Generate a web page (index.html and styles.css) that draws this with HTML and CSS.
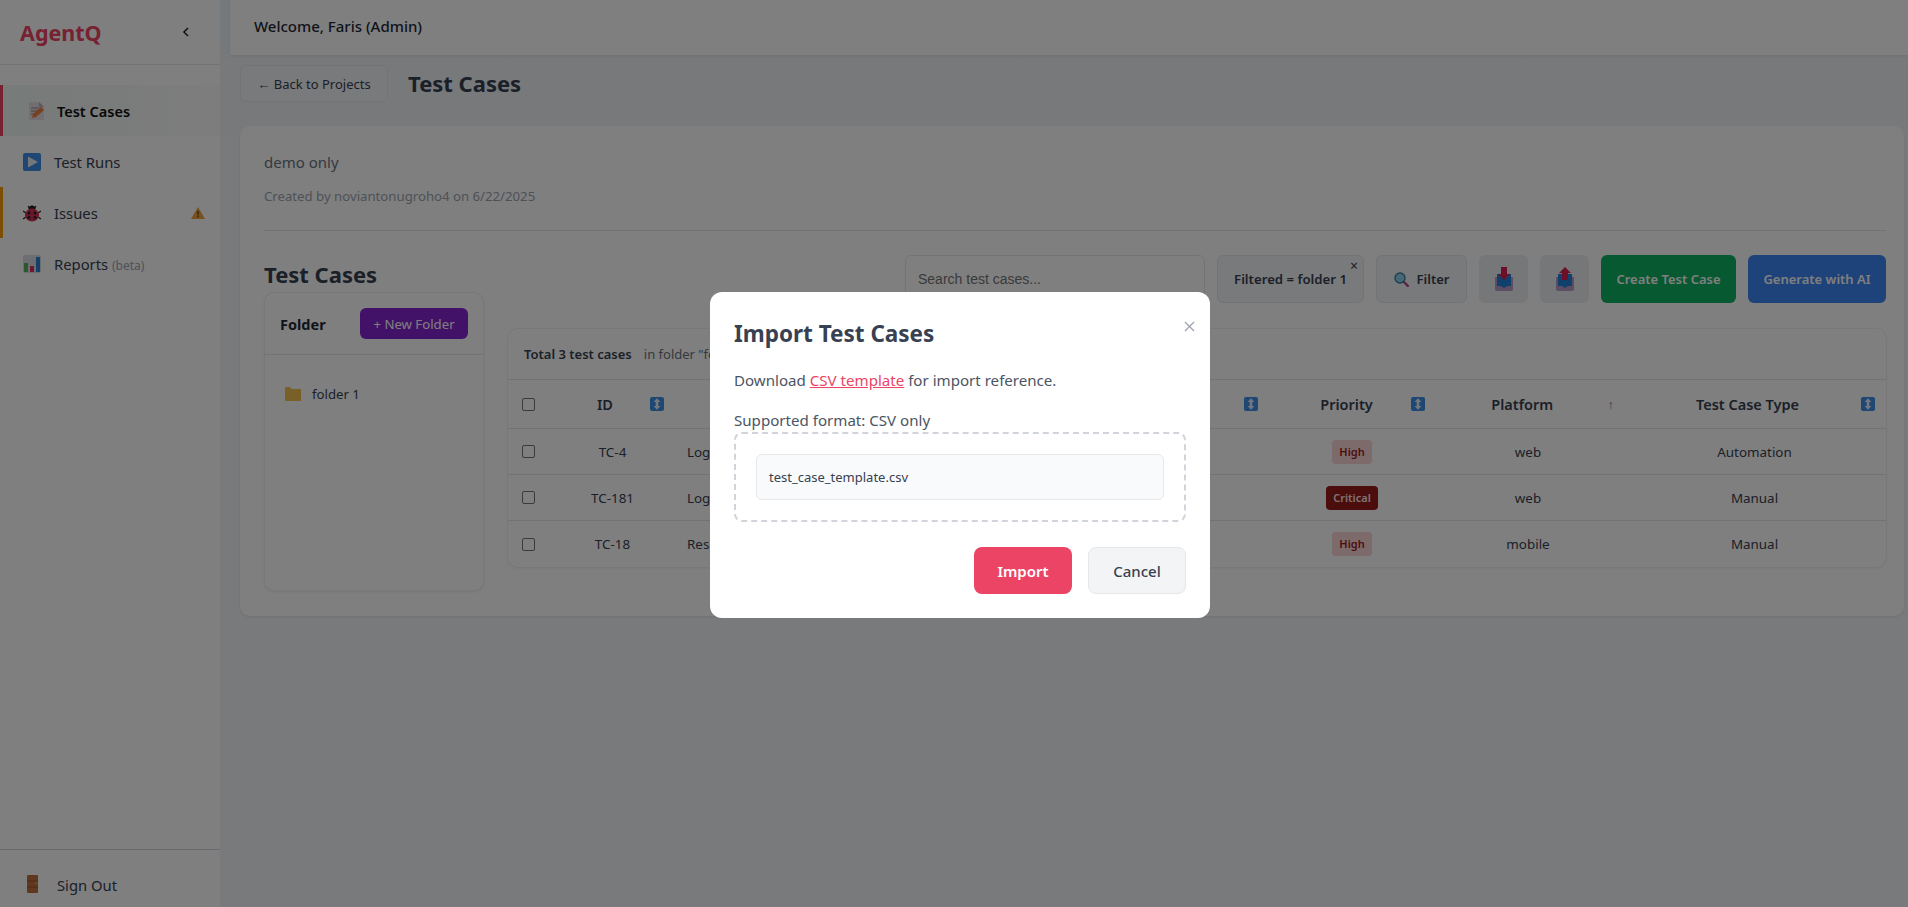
FILE: index.html
```html
<!DOCTYPE html>
<html>

<head>
    <meta content="width=device-width, initial-scale=1" name="viewport" />
    <title>AgentQ - Test Cases</title>
    <link rel="stylesheet" href="styles.css">
</head>

<body>
    <!-- icons used more than once -->
    <svg class="defs" width="0" height="0">
        <symbol id="sort" viewBox="0 0 14 14">
            <rect width="14" height="14" rx="2" fill="#3f8fe8" />
            <path d="M7 1.2 10.4 5H8.3v4h2.1L7 12.8 3.6 9h2.1V5H3.6z" fill="#e8eef6" />
        </symbol>
        <symbol id="tray" viewBox="0 0 20 24">
            <path d="M1 10h18v12a2 2 0 0 1-2 2H3a2 2 0 0 1-2-2z" fill="#b99ac9" />
            <path d="M3 7h14v12h-4l-3 2-3-2H3z" fill="#1f83d8" />
        </symbol>
    </svg>

    <div class="app">
        <aside class="sidebar">
            <div class="brand">
                <span class="logo">AgentQ</span>
                <span class="collapse">
                    <svg width="8" height="10" viewBox="0 0 8 10"><path d="M6 1 2 5l4 4" fill="none" stroke="#1f2937" stroke-width="1.6" /></svg>
                </span>
            </div>
            <nav class="nav">
                <a class="nav-item active">
                    <svg class="nav-icon" width="18" height="18" viewBox="0 0 18 18">
                        <path d="M1 0h10l5 5v13H1z" fill="#e4dce4" />
                        <path d="M11 0l5 5h-5z" fill="#b9adb9" />
                        <path d="M3 6h8M3 9h8M3 12h5" stroke="#94848f" stroke-width="1.2" />
                        <path d="M4 16l1-4 8-7 3 3-8 7z" fill="#f0803c" />
                    </svg>
                    <span>Test Cases</span>
                </a>
                <a class="nav-item">
                    <svg class="nav-icon" width="18" height="18" viewBox="0 0 18 18">
                        <rect width="18" height="18" rx="2" fill="#3f8fe8" />
                        <path d="M5 3.5 15 9 5 14.5z" fill="#e8eef6" />
                    </svg>
                    <span>Test Runs</span>
                </a>
                <a class="nav-item warn">
                    <svg class="nav-icon" width="18" height="18" viewBox="0 0 18 18">
                        <path d="M5 2 7 5M13 2l-2 3M0 7l3 2M18 7l-3 2M0 15l3-2M18 15l-3-2" stroke="#222" stroke-width="1.2" />
                        <circle cx="9" cy="5" r="3.5" fill="#222" />
                        <ellipse cx="9" cy="11" rx="7" ry="6.5" fill="#d22f52" />
                        <circle cx="6" cy="9" r="1.5" fill="#222" />
                        <circle cx="12" cy="9" r="1.5" fill="#222" />
                        <circle cx="6" cy="13.5" r="1.5" fill="#222" />
                        <circle cx="12" cy="13.5" r="1.5" fill="#222" />
                    </svg>
                    <span>Issues</span>
                    <svg class="alert" width="14" height="12" viewBox="0 0 14 12">
                        <path d="M7 0 14 12H0z" fill="#f2a33a" />
                        <path d="M6.4 4h1.2l-.2 4.4h-.8zM6.4 9.2h1.2v1.2H6.4z" fill="#222" />
                    </svg>
                </a>
                <a class="nav-item">
                    <svg class="nav-icon" width="18" height="18" viewBox="0 0 18 18">
                        <rect width="18" height="18" rx="2" fill="#d8dde2" />
                        <rect x="1" y="8" width="4" height="9" fill="#57b05c" />
                        <rect x="7" y="11" width="4" height="6" fill="#d63060" />
                        <rect x="13" y="2" width="4" height="15" fill="#2b80d0" />
                    </svg>
                    <span>Reports <small class="beta">(beta)</small></span>
                </a>
            </nav>
            <a class="sign-out">
                <svg width="11" height="18" viewBox="0 0 11 18">
                    <rect width="11" height="18" rx="1" fill="#c0703c" />
                    <path d="M0 6h11M0 12h11" stroke="#9c5528" />
                    <rect x="8.5" y="7.5" width="1.5" height="1.5" fill="#f0b050" />
                </svg>
                <span>Sign Out</span>
            </a>
        </aside>

        <div class="main">
            <header class="topbar">Welcome, Faris (Admin)</header>

            <div class="page-head">
                <button class="back">← Back to Projects</button>
                <h1>Test Cases</h1>
            </div>

            <section class="card">
                <p class="desc">demo only</p>
                <p class="meta">Created by noviantonugroho4 on 6/22/2025</p>
                <hr class="rule">

                <div class="toolbar">
                    <h2>Test Cases</h2>
                    <div class="tools">
                        <input class="search" placeholder="Search test cases...">
                        <div class="chip">Filtered = folder 1<span class="chip-x">×</span></div>
                        <button class="tool">
                            <svg width="15" height="15" viewBox="0 0 15 15">
                                <path d="m9.5 9.5 4.3 4.3" stroke="#b0488c" stroke-width="2.4" stroke-linecap="round" />
                                <circle cx="6" cy="6" r="5" fill="#8fd0ec" stroke="#3d7fa0" stroke-width="1.4" />
                            </svg>
                            Filter
                        </button>
                        <button class="tool square">
                            <svg width="20" height="24" viewBox="0 0 20 24">
                                <use href="#tray" />
                                <path d="M7 0h6v7h3l-6 6-6-6h3z" fill="#d81e50" />
                            </svg>
                        </button>
                        <button class="tool square">
                            <svg width="20" height="24" viewBox="0 0 20 24">
                                <use href="#tray" />
                                <path d="M7 13V6H4l6-6 6 6h-3v7z" fill="#d81e50" />
                            </svg>
                        </button>
                        <button class="tool create">Create Test Case</button>
                        <button class="tool generate">Generate with AI</button>
                    </div>
                </div>

                <div class="columns">
                    <div class="folders">
                        <div class="folders-head">
                            <span>Folder</span>
                            <button class="new-folder">+ New Folder</button>
                        </div>
                        <div class="folder-list">
                            <div class="folder">
                                <svg width="16" height="14" viewBox="0 0 16 14">
                                    <path d="M0 1a1 1 0 0 1 1-1h4l2 2h9v12H0z" fill="#f0c050" />
                                </svg>
                                folder 1
                            </div>
                        </div>
                    </div>

                    <div class="table-box">
                        <div class="total"><b>Total 3 test cases</b><span>in folder "folder 1"</span></div>
                        <div class="row head">
                            <div class="c-check"><span class="box"></span></div>
                            <div class="c-id"><span class="label">ID</span><svg class="s" width="14" height="14"><use href="#sort" /></svg></div>
                            <div class="c-title"><span class="label">Title</span><svg class="s" width="14" height="14"><use href="#sort" /></svg></div>
                            <div class="c-prio"><span class="label">Priority</span><svg class="s" width="14" height="14"><use href="#sort" /></svg></div>
                            <div class="c-plat"><span class="label">Platform</span><span class="up">↑</span></div>
                            <div class="c-type"><span class="label">Test Case Type</span><svg class="s" width="14" height="14"><use href="#sort" /></svg></div>
                        </div>
                        <div class="row">
                            <div class="c-check"><span class="box"></span></div>
                            <div class="c-id">TC-4</div>
                            <div class="c-title">Login with valid credentials</div>
                            <div class="c-prio"><span class="badge high">High</span></div>
                            <div class="c-plat">web</div>
                            <div class="c-type">Automation</div>
                        </div>
                        <div class="row">
                            <div class="c-check"><span class="box"></span></div>
                            <div class="c-id">TC-181</div>
                            <div class="c-title">Login with invalid password</div>
                            <div class="c-prio"><span class="badge critical">Critical</span></div>
                            <div class="c-plat">web</div>
                            <div class="c-type">Manual</div>
                        </div>
                        <div class="row last">
                            <div class="c-check"><span class="box"></span></div>
                            <div class="c-id">TC-18</div>
                            <div class="c-title">Responsive layout on mobile</div>
                            <div class="c-prio"><span class="badge high">High</span></div>
                            <div class="c-plat">mobile</div>
                            <div class="c-type">Manual</div>
                        </div>
                    </div>
                </div>
            </section>
        </div>
    </div>

    <div class="overlay">
        <div class="modal">
            <span class="modal-x">
                <svg width="11" height="11" viewBox="0 0 11 11"><path d="M1 1l9 9M10 1l-9 9" stroke="#9ca3af" stroke-width="1.3" /></svg>
            </span>
            <h3>Import Test Cases</h3>
            <p class="dl">Download <a class="csv">CSV template</a> for import reference.</p>
            <p class="fmt">Supported format: CSV only</p>
            <div class="drop">
                <div class="file">test_case_template.csv</div>
            </div>
            <div class="actions">
                <button class="btn-import">Import</button>
                <button class="btn-cancel">Cancel</button>
            </div>
        </div>
    </div>
</body>

</html>
```

FILE: styles.css
```css
html,
body {
    height: 100%;
    margin: 0;
}

body {
    font-family: "Noto Sans", sans-serif;
    color: #374151;
    overflow: hidden;
}

.defs {
    display: block;
}

button {
    font-family: inherit;
}

.app {
    display: flex;
    height: 907px;
    background: #f3f4f6;
}

/* sidebar */
.sidebar {
    width: 220px;
    flex-shrink: 0;
    display: flex;
    flex-direction: column;
    background: #fff;
}

.brand {
    height: 64px;
    display: flex;
    align-items: center;
    justify-content: space-between;
    padding: 0 30px 0 20px;
    border-bottom: 1px solid #e5e7eb;
    box-sizing: content-box;
}

.logo {
    color: #ec4465;
    font-size: 21.5px;
    font-weight: 700;
}

.collapse {
    display: flex;
}

.nav {
    flex: 1;
    padding-top: 20px;
}

.nav-item {
    height: 51px;
    display: flex;
    align-items: center;
    gap: 13px;
    padding-left: 23px;
    font-size: 14.8px;
    position: relative;
}

.nav-item.active {
    background: linear-gradient(90deg, #eef6f2, #fafafa);
    color: #111;
    font-weight: 600;
    font-size: 14.5px;
    padding-left: 28px;
    gap: 11px;
    box-shadow: inset 3px 0 0 #ec4465;
}

.nav-item.warn {
    box-shadow: inset 3px 0 0 #f59e0b;
}

.alert {
    position: absolute;
    right: 15px;
}

.beta {
    color: #9ca3af;
    font-size: 12px;
}

.sign-out {
    height: 58px;
    box-sizing: border-box;
    display: flex;
    align-items: flex-start;
    gap: 19px;
    padding: 25px 0 0 27px;
    font-size: 14.8px;
    line-height: 20px;
    border-top: 1px solid #d1d5db;
    margin-top: auto;
}

/* main column */
.main {
    flex: 1;
    min-width: 0;
    padding-left: 10px;
    background: linear-gradient(#ecf2f7, #f0f3f6 130px, #f3f4f6 140px);
}

.topbar {
    height: 55px;
    display: flex;
    align-items: center;
    padding: 0 0 3px 24px;
    box-sizing: border-box;
    background: #fff;
    font-size: 15px;
    font-weight: 500;
    color: #1f2937;
    box-shadow: 0 1px 3px rgba(0, 0, 0, .08);
}

.page-head {
    display: flex;
    align-items: flex-start;
    gap: 20px;
    height: 71px;
    padding: 10px 0 0 10px;
    box-sizing: border-box;
}

.back {
    width: 148px;
    height: 37px;
    border: 1px solid #e5e7eb;
    border-radius: 6px;
    background: #f3f4f6;
    font-size: 13px;
    color: #374151;
    padding: 0;
}

h1 {
    margin: 0;
    font-size: 22px;
    line-height: 37px;
    font-weight: 700;
    color: #374151;
}

.card {
    margin: 0 4px 0 10px;
    height: 490px;
    box-sizing: border-box;
    padding: 24px 18px 0 24px;
    background: #fff;
    border-radius: 10px;
    box-shadow: 0 1px 3px rgba(0, 0, 0, .08);
}

.desc {
    margin: 0;
    font-size: 15px;
    line-height: 24px;
    color: #6b7280;
}

.meta {
    margin: 13px 0 0;
    font-size: 13.2px;
    line-height: 18px;
    color: #9ca3af;
}

.rule {
    margin: 25px 0 0;
    border: 0;
    border-top: 1px solid #e5e7eb;
}

.toolbar {
    display: flex;
    justify-content: space-between;
    margin-top: 24px;
}

h2 {
    margin: 3px 0 0;
    font-size: 22px;
    line-height: 32px;
    font-weight: 700;
    color: #374151;
}

.tools {
    display: flex;
    gap: 12px;
    height: 48px;
}

.search {
    width: 300px;
    box-sizing: border-box;
    padding: 0 12px;
    border: 1px solid #e5e7eb;
    border-radius: 6px;
    font-family: "Liberation Sans", sans-serif;
    font-size: 14px;
    background: #fff;
}

.search::placeholder {
    color: #757575;
}

.chip {
    position: relative;
    width: 147px;
    box-sizing: border-box;
    display: flex;
    align-items: center;
    justify-content: center;
    border: 1px solid #e5e7eb;
    border-radius: 6px;
    background: #f3f4f6;
    font-size: 13.2px;
    font-weight: 600;
    color: #374151;
}

.chip-x {
    position: absolute;
    top: 3px;
    right: 5px;
    font-size: 14px;
    line-height: 14px;
    font-weight: 400;
}

.tool {
    display: flex;
    align-items: center;
    justify-content: center;
    gap: 8px;
    width: 91px;
    padding: 0;
    border: 1px solid #e5e7eb;
    border-radius: 6px;
    background: #f3f4f6;
    font-size: 13px;
    font-weight: 600;
    color: #374151;
}

.tool.square {
    width: 49px;
    background: #eceef2;
    border: 0;
}

.tool.create {
    width: 135px;
    border: 0;
    background: #0db260;
    color: #fff;
}

.tool.generate {
    width: 138px;
    border: 0;
    background: #3c86f6;
    color: #fff;
}

.columns {
    display: flex;
    gap: 24px;
    align-items: flex-start;
    margin-top: -11px;
}

/* folder panel */
.folders {
    width: 220px;
    height: 299px;
    box-sizing: border-box;
    flex-shrink: 0;
    border: 1px solid #f0f1f3;
    border-radius: 10px;
    background: #fff;
    box-shadow: 0 1px 3px rgba(0, 0, 0, .08);
}

.folders-head {
    height: 61px;
    display: flex;
    align-items: center;
    justify-content: space-between;
    padding: 0 15px;
    border-bottom: 1px solid #e5e7eb;
    font-size: 14.5px;
    font-weight: 700;
    color: #1f2937;
}

.new-folder {
    width: 108px;
    height: 31px;
    padding: 0;
    border: 0;
    border-radius: 6px;
    background: #8524d0;
    color: #fff;
    font-size: 13.2px;
}

.folder-list {
    padding: 30px 20px;
}

.folder {
    display: flex;
    align-items: center;
    gap: 11px;
    font-size: 13.2px;
    line-height: 18px;
}

/* table */
.table-box {
    flex: 1;
    min-width: 0;
    margin-top: 37px;
    border-radius: 10px;
    background: #fff;
    box-shadow: 0 0 0 1px #f0f1f3, 0 1px 3px rgba(0, 0, 0, .1);
    font-size: 13.4px;
}

.total {
    height: 51px;
    display: flex;
    align-items: center;
    gap: 12px;
    padding-left: 16px;
    box-sizing: border-box;
    border-bottom: 1px solid #e5e7eb;
    font-size: 13px;
    color: #6b7280;
}

.total b {
    color: #374151;
    font-weight: 600;
}

.row {
    height: 46px;
    box-sizing: border-box;
    display: grid;
    grid-template-columns: 42px 125px 602px 150px 196px 263px;
    align-items: center;
    border-bottom: 1px solid #e5e7eb;
    text-align: center;
}

.row.last {
    border-bottom: 0;
}

.row.head {
    height: 49px;
    font-size: 14.5px;
    font-weight: 600;
    color: #374151;
}

.row.head > div {
    display: flex;
    align-items: center;
}

.row.head .c-check {
    display: block;
}

.label {
    flex: 1;
    text-align: center;
}

.s {
    flex-shrink: 0;
}

.c-check {
    padding-left: 14px;
    text-align: left;
}

.c-title {
    text-align: left;
    padding-left: 12px;
    white-space: nowrap;
    overflow: hidden;
}

.c-plat {
    padding-left: 6px;
}

.row.head .c-id {
    padding: 0 11px 0 10px;
}

.row.head .c-title {
    padding-right: 19px;
}

.row.head .c-prio {
    padding: 0 2px 0 5px;
}

.row.head .c-plat {
    padding: 0 9px 0 10px;
}

.row.head .c-type {
    padding: 0 11px;
}

.up {
    color: #6b7280;
    font-weight: 400;
    font-size: 13px;
}

.box {
    display: block;
    width: 13px;
    height: 13px;
    box-sizing: border-box;
    border: 1px solid #767676;
    border-radius: 2px;
    background: #fff;
}

.badge {
    display: inline-block;
    height: 24px;
    line-height: 24px;
    padding: 0 7px;
    border-radius: 4px;
    font-size: 11px;
    font-weight: 600;
}

.badge.high {
    background: #fbd5d5;
    color: #991b1b;
}

.badge.critical {
    background: #991b1b;
    color: #fee2e2;
}

/* import dialog */
.overlay {
    position: fixed;
    top: 0;
    left: 0;
    right: 0;
    bottom: 0;
    display: flex;
    align-items: center;
    justify-content: center;
    padding: 3px 0 0 12px;
    box-sizing: border-box;
    background: rgba(0, 0, 0, .5);
}

.modal {
    position: relative;
    width: 500px;
    box-sizing: border-box;
    padding: 26px 24px 24px;
    border-radius: 12px;
    background: #fff;
}

.modal-x {
    position: absolute;
    top: 29px;
    right: 15px;
    display: flex;
}

h3 {
    margin: 0;
    font-size: 22.5px;
    line-height: 32px;
    font-weight: 700;
    color: #374151;
}

.dl {
    margin: 18px 0 0;
    font-size: 15.1px;
    line-height: 24px;
    color: #4b5563;
}

.csv {
    color: #ec4465;
    text-decoration: underline;
}

.fmt {
    margin: 16px 0 0;
    font-size: 15.1px;
    line-height: 24px;
    color: #4b5563;
}

.drop {
    padding: 20px;
    border: 2px dashed #d1d5db;
    border-radius: 8px;
}

.file {
    height: 46px;
    display: flex;
    align-items: center;
    padding-left: 12px;
    box-sizing: border-box;
    border: 1px solid #e5e7eb;
    border-radius: 6px;
    background: #f9fafb;
    font-size: 13px;
}

.actions {
    display: flex;
    justify-content: flex-end;
    gap: 16px;
    margin-top: 25px;
}

.btn-import,
.btn-cancel {
    width: 98px;
    height: 47px;
    padding: 0;
    border-radius: 8px;
    font-size: 15px;
}

.btn-import {
    border: 0;
    background: #ec4465;
    color: #fff;
    font-weight: 600;
}

.btn-cancel {
    border: 1px solid #e5e7eb;
    background: #f3f4f6;
    color: #374151;
    font-weight: 500;
}
```
